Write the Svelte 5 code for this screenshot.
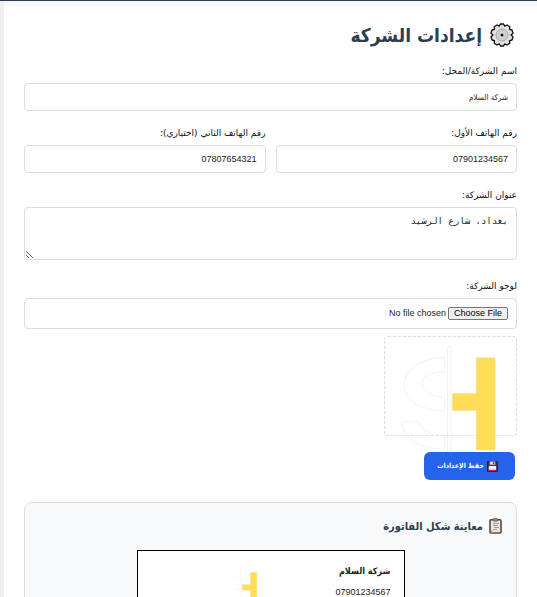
<script lang="ts">
  let name = $state('شركة السلام');
  let phone1 = $state('07901234567');
  let phone2 = $state('07807654321');
  let address = $state('بغداد، شارع الرشيد');
</script>

{#snippet logo()}
  <svg class="logo" viewBox="0 0 132 116" fill="none" role="img" aria-label="SH">
    <g stroke="#ececee" stroke-width="0.7">
      <path d="M60 21 C38 20 18 34 19 48 C20 66 38 73 60 75 V61 C45 59 37 54 37 47 C37 40 46 35 60 35 Z" />
      <path d="M17 85 H34 C37 94 45 99 60 99 V113 C37 113 17 103 17 85 Z" />
      <rect x="63" y="10" width="3.5" height="105" />
    </g>
    <path d="M68 57 H92 V22 Q92 21 93 21 H110 Q111 21 111 22 V113 Q111 114 110 114 H93 Q92 114 92 113 V74 H68 Z" fill="#ffdd59" stroke="#f3df9a" stroke-width="0.6" />
  </svg>
{/snippet}

<div class="app" dir="rtl" lang="ar">
  <main class="content">
    <h1>
      <svg class="gear" viewBox="0 0 24 24" aria-hidden="true">
        <path
          d="M9.3 3.1 L10.4 1 H13.6 L14.7 3.1 L17.1 2 L19.8 3.8 L19.5 6.3 L22 7 L23 10.2 L21 12 L23 13.8 L22 17 L19.5 17.7 L19.8 20.2 L17.1 22 L14.7 20.9 L13.6 23 H10.4 L9.3 20.9 L6.9 22 L4.2 20.2 L4.5 17.7 L2 17 L1 13.8 L3 12 L1 10.2 L2 7 L4.5 6.3 L4.2 3.8 L6.9 2 Z"
          fill="#e2e2e2"
          stroke="#111"
          stroke-width="1.3"
          stroke-linejoin="round"
        />
        <circle cx="12" cy="12" r="6" fill="#d4d4d4" stroke="#8c8c8c" stroke-width="0.7" />
        <circle cx="12" cy="12" r="3.6" fill="#ddd" stroke="#bbb" stroke-width="0.7" />
        <circle cx="12" cy="12" r="1.5" fill="#111" />
      </svg>
      <span>إعدادات الشركة</span>
    </h1>

    <form onsubmit={(e) => e.preventDefault()}>
      <div class="field">
        <label for="name">اسم الشركة/المحل:</label>
        <input id="name" class="small" type="text" bind:value={name} />
      </div>

      <div class="row">
        <div class="field">
          <label for="phone1">رقم الهاتف الأول:</label>
          <input id="phone1" type="text" bind:value={phone1} />
        </div>
        <div class="field">
          <label for="phone2">رقم الهاتف الثاني (اختياري):</label>
          <input id="phone2" type="text" bind:value={phone2} />
        </div>
      </div>

      <div class="field address">
        <label for="address">عنوان الشركة:</label>
        <textarea id="address" bind:value={address}></textarea>
      </div>

      <div class="field">
        <label for="logo">لوجو الشركة:</label>
        <input id="logo" type="file" accept="image/*" />
      </div>

      <div class="logo-box">{@render logo()}</div>

      <button class="save" type="submit">
        <svg class="disk" viewBox="0 0 12 12" aria-hidden="true">
          <path d="M0.5 0.5 H10.5 L11.5 1.5 V11.5 H0.5 Z" fill="#3b3440" stroke="#231f2b" />
          <rect x="3" y="0.5" width="6" height="3.6" fill="#d6d6dc" />
          <rect x="6.7" y="1" width="1.2" height="2.4" fill="#3b3440" />
          <rect x="2" y="5.4" width="8" height="5" fill="#f1edf0" />
          <rect x="2" y="9.6" width="8" height="1.4" fill="#c2185b" />
        </svg>
        <span>حفظ الإعدادات</span>
      </button>
    </form>

    <section class="preview">
      <h2>
        <svg class="clipboard" viewBox="0 0 13 16" aria-hidden="true">
          <rect x="1" y="1.8" width="11" height="13.2" rx="1" fill="#e8e6e3" stroke="#5f4a3c" stroke-width="1.6" />
          <rect x="4" y="0.6" width="5" height="2.6" rx="0.8" fill="#8d8d8d" stroke="#444" stroke-width="0.6" />
          <path d="M4 5.5 H10 M4 7.5 H9 M5 9.5 H10 M4 11.5 H8" stroke="#8a8a8a" stroke-width="0.8" />
          <path d="M2 12 L5 14.4 H2 Z" fill="#b8b2aa" />
        </svg>
        <span>معاينة شكل الفاتورة</span>
      </h2>
      <div class="invoice">
        <div class="company">
          <strong>{name}</strong>
          <span>{phone1}</span>
        </div>
        <div class="invoice-logo">{@render logo()}</div>
      </div>
    </section>
  </main>
</div>

<style>
  :global(body) {
    background: #eef0f3;
    font-family: 'DejaVu Sans Condensed', 'DejaVu Sans', sans-serif;
    color: #222;
  }

  .app {
    box-sizing: border-box;
    height: 100vh;
    overflow: hidden;
    padding-left: 4px;
    border-top: 1px solid #2c3e50;
  }

  .content {
    box-sizing: border-box;
    min-height: 100%;
    padding: 20px;
    background: linear-gradient(#f3f4f9, #fff 8px);
  }

  h1,
  h2 {
    display: flex;
    align-items: center;
    margin: 0;
    color: #2c3e50;
    font-weight: bold;
  }

  h1 {
    gap: 8px;
    height: 28px;
    margin-bottom: 16px;
    padding-right: 3px;
    font-size: 19px;
  }

  .gear {
    width: 24px;
    height: 24px;
  }

  form {
    display: flex;
    flex-direction: column;
  }

  .field {
    display: flex;
    flex: 1;
    flex-direction: column;
    gap: 6px;
    min-width: 0;
    margin-bottom: 16px;
  }

  .field.address {
    margin-bottom: 20px;
  }

  .row {
    display: flex;
    gap: 10px;
  }

  label {
    height: 12px;
    font-family: 'DejaVu Sans', sans-serif;
    font-size: 9px;
    line-height: 12px;
    color: #111;
  }

  input,
  textarea {
    box-sizing: border-box;
    width: 100%;
    height: 28px;
    padding: 8px;
    border: 1px solid #ddd;
    border-radius: 4px;
    background: #fff;
    color: #222;
    font-family: 'Liberation Sans', 'DejaVu Sans Condensed', sans-serif;
    font-size: 9px;
  }

  input.small {
    font-family: 'DejaVu Sans Condensed', 'DejaVu Sans', sans-serif;
    font-size: 8px;
  }

  textarea {
    display: block;
    height: 53px;
    font-family: 'DejaVu Sans Mono', monospace;
    resize: vertical;
  }

  input[type='file'] {
    height: 31px;
  }

  input::file-selector-button {
    margin-inline-end: 2px;
    padding: 0 5px;
    border: 1px solid #767676;
    border-radius: 2px;
    background: #efefef;
    font-family: 'Liberation Sans', sans-serif;
    font-size: 9px;
    line-height: 11px;
  }

  .logo-box {
    box-sizing: border-box;
    width: 133px;
    height: 100px;
    margin-top: -9px;
    border: 1px dashed #ddd;
    border-radius: 4px;
  }

  .logo {
    display: block;
    width: 100%;
  }

  .save {
    display: flex;
    position: relative;
    align-items: center;
    align-self: flex-start;
    justify-content: center;
    gap: 3px;
    width: 91px;
    height: 28px;
    margin: 16px 2px 0;
    padding: 0 4px 0 0;
    border: 0;
    border-radius: 6px;
    background: #2563eb;
    color: #fff;
    font-family: 'DejaVu Sans Condensed', 'DejaVu Sans', sans-serif;
    font-size: 7px;
    font-weight: bold;
  }

  .disk {
    width: 11px;
    height: 11px;
  }

  .preview {
    margin-top: 22px;
    padding: 14px;
    border: 1px solid #ddd;
    border-radius: 8px;
    background: #f8f9fb;
  }

  h2 {
    gap: 6px;
    height: 18px;
    margin-bottom: 15px;
    font-size: 11px;
  }

  .clipboard {
    width: 13px;
    height: 16px;
  }

  .invoice {
    display: grid;
    grid-template-columns: 13fr 45px 7fr;
    box-sizing: border-box;
    width: 268px;
    max-width: 100%;
    min-height: 200px;
    margin: 0 auto;
    padding: 14px 13px;
    border: 1px solid #000;
    background: #fff;
  }

  .company {
    display: flex;
    flex-direction: column;
    gap: 8px;
    font-family: 'Liberation Sans', 'DejaVu Sans Condensed', sans-serif;
    font-size: 9px;
    line-height: 13px;
  }

  .company strong {
    font-family: 'DejaVu Sans Condensed', 'DejaVu Sans', sans-serif;
  }
</style>
